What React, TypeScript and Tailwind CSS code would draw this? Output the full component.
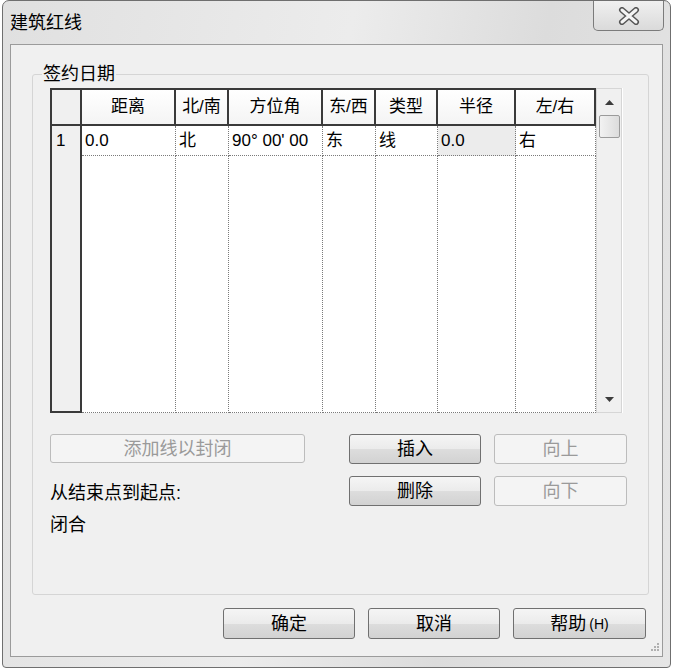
import React from 'react';

const FONT = "font-['Liberation_Sans','Noto_Sans_CJK_SC',sans-serif]";

type Col = { label: string; w: string; value: string; shaded?: boolean };

const COLUMNS: Col[] = [
  { label: '距离', w: 'w-[94px]', value: '0.0' },
  { label: '北/南', w: 'w-[53px]', value: '北' },
  { label: '方位角', w: 'w-[94px]', value: "90° 00' 00" },
  { label: '东/西', w: 'w-[53px]', value: '东' },
  { label: '类型', w: 'w-[62px]', value: '线' },
  { label: '半径', w: 'w-[78px]', value: '0.0', shaded: true },
  { label: '左/右', w: 'w-[80px]', value: '右' },
];

function Btn({
  children,
  disabled,
  className = '',
}: {
  children: React.ReactNode;
  disabled?: boolean;
  className?: string;
}) {
  return (
    <button
      className={
        'flex items-center justify-center rounded-[3px] border text-[18px] leading-none ' +
        (disabled
          ? 'border-[#bcbcbc] bg-[#f4f4f4] text-[#9a9a9a] '
          : 'border-[#707070] bg-[linear-gradient(#f5f5f5,#ebebeb_50%,#dddddd_51%,#d2d2d2)] text-[#000] ') +
        className
      }
    >
      {children}
    </button>
  );
}

function CloseGlyph() {
  return (
    <svg width="22" height="18" viewBox="0 0 22 18">
      <path d="M4 3 L18 15 M18 3 L4 15" stroke="#555" strokeWidth="6" strokeLinecap="round" />
      <path d="M4 3 L18 15 M18 3 L4 15" stroke="#f4f4f4" strokeWidth="3" strokeLinecap="round" />
    </svg>
  );
}

function Grid() {
  return (
    <div className="flex h-[325px] w-[573px] bg-white">
      {/* row header column */}
      <div className="flex w-[32px] flex-col border-l-2 border-t-2 border-b-2 border-[#3a3a3a] bg-[#f0f0f0]">
        <div className="h-[36px] border-b-2 border-r-2 border-[#3a3a3a]" />
        <div className="flex h-[30px] items-center border-r-2 border-[#3a3a3a] pl-[4px] text-[17px] text-[#000]">
          1
        </div>
        <div className="flex-1 border-r-2 border-[#3a3a3a]" />
      </div>

      {COLUMNS.map((c) => (
        <div key={c.label} className={'flex flex-col ' + c.w}>
          <div className="flex h-[38px] items-center justify-center border-y-2 border-r-2 border-[#3a3a3a] bg-[linear-gradient(#ffffff,#f4f4f4)] text-[17px] text-[#000]">
            {c.label}
          </div>
          <div
            className={
              'flex h-[30px] items-center whitespace-nowrap overflow-hidden border-b border-r border-dotted border-[#7a7a7a] pl-[3px] text-[17px] text-[#000] ' +
              (c.shaded ? 'bg-[#ececec]' : 'bg-white')
            }
          >
            {c.value}
          </div>
          <div className="flex-1 border-b border-r border-dotted border-[#7a7a7a]" />
        </div>
      ))}

      {/* vertical scrollbar */}
      <div className="flex w-[26px] flex-col items-center border border-[#d6d6d6] bg-[#f0f0f0]">
        <div className="flex h-[26px] w-full items-center justify-center">
          <svg width="9" height="5" viewBox="0 0 9 5">
            <path d="M0 5 L4.5 0 L9 5 Z" fill="#3c3c3c" />
          </svg>
        </div>
        <div className="h-[23px] w-[21px] rounded-[2px] border border-[#9b9b9b] bg-[linear-gradient(90deg,#f2f2f2,#dcdcdc)]" />
        <div className="flex-1" />
        <div className="flex h-[26px] w-full items-center justify-center">
          <svg width="9" height="5" viewBox="0 0 9 5">
            <path d="M0 0 L9 0 L4.5 5 Z" fill="#3c3c3c" />
          </svg>
        </div>
      </div>
    </div>
  );
}

export default function App() {
  return (
    <div className={'h-[668px] w-[675px] bg-white ' + FONT}>
      <div className="ml-[2px] flex h-[668px] w-[669px] flex-col rounded-t-[7px] rounded-b-[4px] border border-[#6f6f6f] bg-[linear-gradient(100deg,#e0e0e0,#ececec_45%,#dcdcdc_70%,#e6e6e6)] px-[7px]">
        {/* title bar */}
        <div className="flex h-[43px] items-start justify-between">
          <div className="pt-[11px] text-[18px] leading-[22px] text-[#000]">建筑红线</div>
          <div className="mr-[-1px] flex h-[30px] w-[71px] items-center justify-center rounded-b-[5px] border border-t-0 border-[#7b7b7b] bg-[linear-gradient(#f0f0f0,#dadada)]">
            <CloseGlyph />
          </div>
        </div>

        {/* client area */}
        <div className="relative flex h-[613px] flex-col border border-[#9b9b9b] bg-[#f0f0f0]">
          <fieldset className="ml-[21px] mt-[19px] h-[531px] w-[617px] rounded-[3px] border border-[#d5d5d5] px-[17px] pt-[4px] text-[#000]">
            <legend className="ml-[-8px] px-[1px] text-[18px] leading-[20px]">签约日期</legend>
            <Grid />

            <div className="mt-[21px] flex items-start">
              <div className="flex w-[255px] flex-col">
                <Btn disabled className="h-[29px] w-[255px]">
                  添加线以封闭
                </Btn>
                <div className="mt-[20px] text-[18px] leading-[20px]">从结束点到起点:</div>
                <div className="mt-[12px] text-[18px] leading-[20px]">闭合</div>
              </div>
              <div className="ml-[44px] grid grid-cols-[132px_133px] gap-x-[13px] gap-y-[12px]">
                <Btn className="h-[30px]">插入</Btn>
                <Btn disabled className="h-[30px]">
                  向上
                </Btn>
                <Btn className="h-[30px]">删除</Btn>
                <Btn disabled className="h-[30px]">
                  向下
                </Btn>
              </div>
            </div>
          </fieldset>

          <div className="mt-[13px] flex justify-end gap-[13px] pr-[16px]">
            <Btn className="h-[31px] w-[132px]">确定</Btn>
            <Btn className="h-[31px] w-[132px]">取消</Btn>
            <Btn className="h-[31px] w-[133px]">
              帮助 <span className="ml-[3px] text-[14px]">(H)</span>
            </Btn>
          </div>

          {/* resize grip */}
          <svg className="absolute bottom-[2px] right-[2px]" width="12" height="12" viewBox="0 0 12 12">
            {[
              [9, 1],
              [6, 4],
              [9, 4],
              [3, 7],
              [6, 7],
              [9, 7],
            ].map(([x, y]) => (
              <rect key={`${x}-${y}`} x={x} y={y} width="2" height="2" fill="#b0b0b0" />
            ))}
          </svg>
        </div>
      </div>
    </div>
  );
}
